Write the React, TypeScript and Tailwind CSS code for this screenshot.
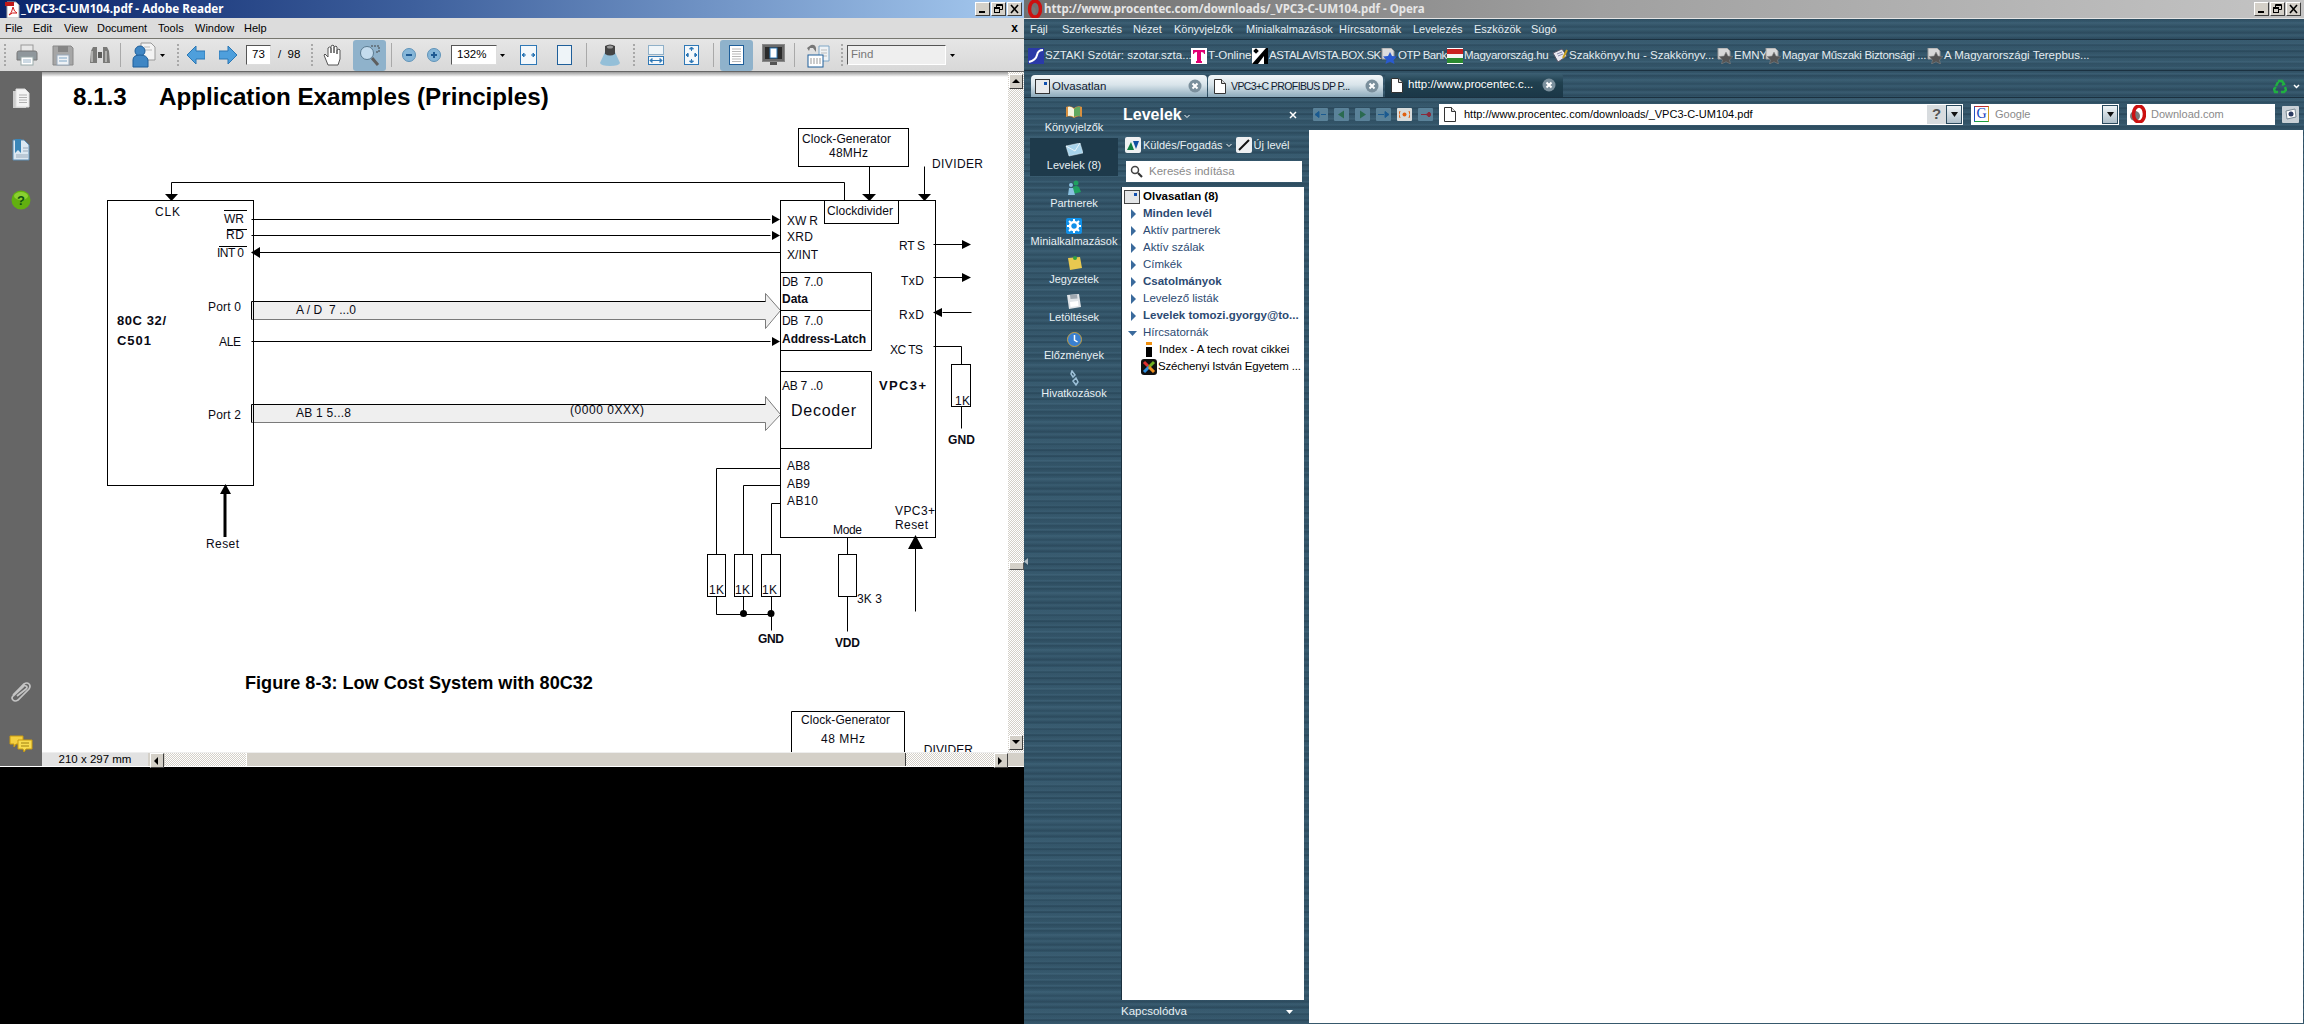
import React from 'react';

const stripes =
  'bg-[repeating-linear-gradient(180deg,rgba(20,40,55,0.30)_0px,rgba(20,40,55,0)_2px,rgba(120,160,180,0.10)_5px,rgba(20,40,55,0.18)_7px,rgba(120,160,180,0.06)_11px,rgba(20,40,55,0.28)_13px,rgba(120,160,180,0.08)_17px,rgba(20,40,55,0.30)_19px),repeating-linear-gradient(180deg,#33566b_0px,#3a5d72_1px,#2f5064_2px,#365a6e_3px)]';
const dither = 'bg-[repeating-conic-gradient(#d4d0c8_0_25%,#ffffff_0_50%)] bg-[length:2px_2px]';
const ui = 'font-["Liberation_Sans",sans-serif]';
const uiB = 'font-["Noto_Sans","Liberation_Sans",sans-serif]';

function WinBtn({ kind }: { kind: 'min' | 'max' | 'x' }) {
  return (
    <div className="w-[15px] h-[14px] bg-[#d4d0c8] border border-t-white border-l-white border-r-[#404040] border-b-[#404040] flex items-center justify-center">
      <svg width="11" height="10" viewBox="0 0 11 10">
        {kind === 'min' && <rect x="2" y="7" width="6" height="2" fill="#000" />}
        {kind === 'max' && (
          <g fill="none" stroke="#000">
            <path d="M3.5 3V.5h6v5H7" />
            <path d="M3 1.5h6" strokeWidth="1" />
            <rect x="1.5" y="3.5" width="5" height="5" />
            <path d="M1 4.5h6" />
          </g>
        )}
        {kind === 'x' && <path d="M2 1l7 8M9 1L2 9" stroke="#000" strokeWidth="1.6" />}
      </svg>
    </div>
  );
}

function Grip({ cls }: { cls: string }) {
  return <div className={`w-[2px] h-[22px] border-l-2 border-dotted border-[#a8a8a8] ${cls}`} />;
}
function Sep({ cls }: { cls: string }) {
  return <div className={`w-[1px] h-[24px] bg-[#a9a9a9] ${cls}`} />;
}
function Dd({ cls }: { cls: string }) {
  return (
    <svg className={cls} width="5" height="3" viewBox="0 0 5 3">
      <path d="M0 0h5L2.5 3z" fill="#000" />
    </svg>
  );
}

function ZoomCircle({ cls, plus }: { cls: string; plus: boolean }) {
  return (
    <svg className={cls} width="14" height="14" viewBox="0 0 14 14">
      <circle cx="7" cy="7" r="6.5" fill="#86b6d8" stroke="#5f93b8" />
      <path d={plus ? 'M4 7h6M7 4v6' : 'M4 7h6'} stroke="#1f5a92" strokeWidth="2" />
    </svg>
  );
}

function Toolbar() {
  return (
    <div className="h-[34px] bg-[linear-gradient(180deg,#e6e6e6,#d8d8d8)] border-t border-b border-t-[#77776f] border-b-[#666] flex items-center pl-[4px] shrink-0">
      <Grip cls="" />
      <svg className="ml-[10px]" width="22" height="22" viewBox="0 0 22 22">
        <rect x="5" y="1" width="12" height="7" fill="#e8e8e8" stroke="#999" />
        <path d="M1 9q0-2 2-2h16q2 0 2 2v7H1z" fill="#8f979c" stroke="#777" />
        <rect x="5" y="13" width="12" height="8" fill="#fff" stroke="#9aa" />
        <path d="M7 16h8M7 18h8" stroke="#9ab4c8" />
      </svg>
      <svg className="ml-[14px]" width="22" height="22" viewBox="0 0 22 22">
        <path d="M1 2h18l2 2v17H1z" fill="#a6a6a6" stroke="#888" />
        <rect x="6" y="2" width="10" height="6" fill="#858585" />
        <rect x="5" y="11" width="12" height="10" fill="#eef2f6" stroke="#9ab" />
        <path d="M7 14h8M7 17h8" stroke="#7fa6c6" />
      </svg>
      <svg className="ml-[15px]" width="22" height="22" viewBox="0 0 22 22">
        <path d="M1 19l1-12 2-4h4v16z" fill="#7a7a78" />
        <path d="M21 19l-1-12-2-4h-4v16z" fill="#7a7a78" />
        <rect x="9" y="8" width="4" height="6" fill="#5e5e5c" />
        <path d="M3 7v11M17 7v11" stroke="#b0b0ae" strokeWidth="2" />
      </svg>
      <Sep cls="ml-[9px]" />
      <svg className="ml-[11px]" width="24" height="26" viewBox="0 0 24 26">
        <path d="M9 1h10l4 4v13H9z" fill="#f3f3f3" stroke="#999" />
        <path d="M12 5h6M12 8h8" stroke="#bbb" />
        <circle cx="8" cy="9" r="5" fill="#3f86c4" stroke="#1f5f9a" />
        <path d="M1 25v-7q0-5 7-5t8 5v7z" fill="#3f86c4" stroke="#1f5f9a" />
      </svg>
      <Dd cls="ml-[4px]" />
      <Grip cls="ml-[12px]" />
      <svg className="ml-[8px]" width="18" height="20" viewBox="0 0 18 20">
        <path d="M0 10L9 1v5h9v8H9v5z" fill="#4e9fdc" stroke="#2a77b4" />
      </svg>
      <svg className="ml-[14px]" width="18" height="20" viewBox="0 0 18 20">
        <path d="M18 10L9 1v5H0v8h9v5z" fill="#4e9fdc" stroke="#2a77b4" />
      </svg>
      <div className={`ml-[9px] w-[25px] h-[20px] bg-white border border-t-[#555] border-l-[#555] border-r-[#ddd] border-b-[#ddd] flex items-center justify-center text-[11.5px] text-black ${ui}`}>73</div>
      <div className={`ml-[7px] w-[22px] text-[11.5px] text-black whitespace-pre ${ui}`}>/  98</div>
      <Grip cls="ml-[11px]" />
      <svg className="ml-[10px]" width="20" height="22" viewBox="0 0 20 22">
        <path d="M5 21L1 11l1-1 3 3V4l1.5-1L8 4v5V2l2-1 1 1v7V3l2-1 1 1v7-4l2-1 1 1v9l-2 6z" fill="#fff" stroke="#555" strokeLinejoin="round" />
      </svg>
      <div className="ml-[10px] w-[33px] h-[31px] bg-[#8fb2cb] rounded-[3px] flex items-center justify-center">
        <svg width="24" height="24" viewBox="0 0 24 24">
          <path d="M13 3h8v6h-4" fill="none" stroke="#444" strokeDasharray="2 1" />
          <circle cx="9" cy="10" r="6.5" fill="#c4dcee" stroke="#5a7a90" />
          <path d="M14 15l6 7" stroke="#5e5e5e" strokeWidth="3" />
        </svg>
      </div>
      <Sep cls="ml-[5px]" />
      <ZoomCircle cls="ml-[10px]" plus={false} />
      <ZoomCircle cls="ml-[11px]" plus />
      <div className={`ml-[10px] w-[46px] h-[20px] bg-white border border-t-[#555] border-l-[#555] border-r-[#ddd] border-b-[#ddd] flex items-center pl-[5px] text-[11.5px] text-black ${ui}`}>132%</div>
      <Dd cls="ml-[3px]" />
      <svg className="ml-[15px]" width="17" height="20" viewBox="0 0 17 20">
        <rect x=".5" y=".5" width="16" height="19" fill="#f4f8fb" stroke="#2f78b6" />
        <path d="M2 10h4M11 10h4M2 10l2-2v4zM15 10l-2-2v4z" stroke="#2f78b6" fill="#2f78b6" />
      </svg>
      <svg className="ml-[20px]" width="15" height="20" viewBox="0 0 15 20">
        <rect x=".5" y=".5" width="14" height="19" fill="#eef4f8" stroke="#1f5f9a" />
      </svg>
      <Sep cls="ml-[14px]" />
      <svg className="ml-[13px]" width="20" height="22" viewBox="0 0 20 22">
        <path d="M5 8h10l5 11q-1 3-10 3T0 19z" fill="#94bfd8" />
        <path d="M5 2q5-3 10 0v8q-5 3-10 0z" fill="#444" />
        <ellipse cx="10" cy="3" rx="3" ry="1.5" fill="#999" />
      </svg>
      <Grip cls="ml-[13px]" />
      <svg className="ml-[13px]" width="16" height="20" viewBox="0 0 16 20">
        <rect x=".5" y=".5" width="15" height="9" fill="#f0f5f8" stroke="#8fb0c8" />
        <rect x=".5" y="11.5" width="15" height="8" fill="#f4f8fb" stroke="#2f78b6" />
        <path d="M2 15.5h12M2 15.5l2-2v4zM14 15.5l-2-2v4z" stroke="#2f78b6" fill="#2f78b6" />
      </svg>
      <svg className="ml-[20px]" width="15" height="20" viewBox="0 0 15 20">
        <rect x=".5" y=".5" width="14" height="19" fill="#f4f8fb" stroke="#2f78b6" />
        <path d="M7.5 2v4M7.5 14v4M2 10h3M10 10h3M7.5 2l-2 2h4zM7.5 18l-2-2h4zM2 10l2-2v4zM13 10l-2-2v4z" stroke="#2f78b6" fill="#2f78b6" />
      </svg>
      <Sep cls="ml-[14px]" />
      <div className="ml-[6px] w-[33px] h-[31px] bg-[#8fb2cb] rounded-[3px] flex items-center justify-center">
        <svg width="15" height="20" viewBox="0 0 15 20">
          <rect x=".5" y=".5" width="14" height="19" fill="#fff" stroke="#1f5f9a" />
          <path d="M3 4h9M3 6.5h9M3 9h9M3 11.5h9M3 14h9M3 16.5h9" stroke="#b8b8b8" />
        </svg>
      </div>
      <svg className="ml-[9px]" width="23" height="22" viewBox="0 0 23 22">
        <rect x=".5" y=".5" width="22" height="17" fill="#6a6a6a" stroke="#888" />
        <rect x="3" y="3" width="17" height="12" fill="#2a2a2a" />
        <rect x="8" y="4" width="7" height="10" fill="#fff" stroke="#2f78b6" />
        <rect x="8" y="18" width="7" height="3" fill="#555" />
      </svg>
      <Sep cls="ml-[9px]" />
      <svg className="ml-[11px]" width="24" height="26" viewBox="0 0 24 26">
        <path d="M13 4h10v15H13z" fill="#eef2f5" stroke="#7fa6c6" />
        <path d="M15 8h6M15 11h6M15 14h6" stroke="#bbb" />
        <path d="M10 10V6Q9 2 5 3L1 6l2 3 1-3 3 0z" fill="#777" />
        <rect x="2" y="13" width="15" height="12" fill="#fff" stroke="#1f5f9a" />
        <path d="M5 16v6M8 16v6M11 16v6M14 16v6" stroke="#999" />
      </svg>
      <Grip cls="ml-[11px]" />
      <div className={`ml-[4px] w-[99px] h-[20px] bg-[#efefef] border border-t-[#555] border-l-[#555] border-r-white border-b-white flex items-center pl-[3px] text-[11.5px] text-[#777] ${ui}`}>Find</div>
      <Dd cls="ml-[4px]" />
    </div>
  );
}

function T({ x, y, w, b, s = 12, c = '#0a0a14', children }: { x: number; y: number; w?: number; b?: boolean; s?: number; c?: string; children: string }) {
  return (
    <text x={x} y={y} fontSize={s} fontWeight={b ? 700 : 400} fill={c} textLength={w} lengthAdjust={w ? 'spacing' : undefined} className="whitespace-pre">
      {children}
    </text>
  );
}

function Diagram() {
  const res = (x: number, y: number, w = 18) => <rect x={x} y={y} width={w} height={42} />;
  return (
    <svg width="966" height="550" viewBox="42 120 966 550" className='block font-["Liberation_Sans",sans-serif]'>
      <polygon points="251,301 765,301 765,293 780,310 765,328 765,319 251,319" fill="#efefef" />
      <polygon points="251,404 765,404 765,396 780,414 765,430 765,422 251,422" fill="#efefef" />
      <g transform="translate(0.5 0.5)" fill="none" stroke="#000">
        <path d="M251 319H765V328L780 310L765 293V301M251 422H765V430L780 414L765 396V404" stroke="#7a7a7a" />
        <path d="M251 301H765M251 404H765" />
        <path d="M251 301V319M251 404V422" />
        <rect x="107" y="200" width="146" height="285" />
        <rect x="780" y="200" width="155" height="337" />
        <rect x="798" y="128" width="110" height="38" />
        <rect x="824" y="200" width="74" height="23" fill="#fff" />
        <path d="M780 272H871V350H780M780 310H870M780 371H871V448H780" />
        <path d="M171 195V182H844V200" />
        <path d="M869 166V195M924 166V195" />
        <path d="M251 219H770M251 235H770M258 252H780M251 341H770" />
        <path d="M933 244H965M933 277H965M942 312H971" />
        <path d="M933 346H961V364M961 406V428" />
        <rect x="951" y="364" width="19" height="42" />
        <path d="M780 468H716V554M780 485H743V554M780 503H771V554" />
        {res(707, 554)}
        {res(734, 554)}
        {res(761, 554, 19)}
        <path d="M716 596V614H771M743 596V614M771 596V630" />
        <path d="M847 537V554M847 596V631" />
        {res(838, 554)}
        <path d="M915 546V611" />
      </g>
      <path d="M225 491V537" stroke="#000" strokeWidth="3" />
      <g fill="#000">
        <polygon points="165,194 178,194 171.5,201" />
        <polygon points="862,194 876,194 869.5,201" />
        <polygon points="918,194 931,194 924.5,201" />
        <polygon points="251,252.5 260,247 260,258" />
        <polygon points="772,215 780,219.5 772,224" />
        <polygon points="772,231 780,235.5 772,240" />
        <polygon points="772,337 780,341.5 772,346" />
        <polygon points="962,240 971,244.5 962,249" />
        <polygon points="962,273 971,277.5 962,282" />
        <polygon points="933,312.5 942,308 942,317" />
        <polygon points="225.5,484 220,494 231,494" />
        <polygon points="915.5,535 908,549 923,549" />
        <circle cx="743.5" cy="613.5" r="3.5" />
        <circle cx="771" cy="613.5" r="3.5" />
      </g>
      <path d="M224 210.5H247M227 229.5H247M219 246.5H247" stroke="#000" />
      <g>
        <T x={155} y={216} w={25}>CLK</T>
        <T x={224} y={223} w={20}>WR</T>
        <T x={226} y={239} w={18}>RD</T>
        <T x={217} y={257} w={27}>INT 0</T>
        <T x={208} y={311} w={33}>Port 0</T>
        <T x={219} y={346} w={22}>ALE</T>
        <T x={208} y={419} w={33}>Port 2</T>
        <T x={117} y={325} w={49} b s={13}>80C 32/</T>
        <T x={117} y={345} w={34} b s={13}>C501</T>
        <T x={296} y={314} w={60}>A / D  7 ...0</T>
        <T x={296} y={417} w={55}>AB 1 5...8</T>
        <T x={570} y={414} w={74}>(0000 0XXX)</T>
        <T x={206} y={548} w={33}>Reset</T>
        <T x={802} y={143} w={89}>Clock-Generator</T>
        <T x={829} y={157} w={39}>48MHz</T>
        <T x={932} y={168} w={51}>DIVIDER</T>
        <T x={827} y={215} w={66}>Clockdivider</T>
        <T x={787} y={225} w={31}>XW R</T>
        <T x={787} y={241} w={26}>XRD</T>
        <T x={787} y={259} w={31}>X/INT</T>
        <T x={782} y={286} w={41}>DB  7..0</T>
        <T x={782} y={303} w={26} b>Data</T>
        <T x={782} y={325} w={41}>DB  7..0</T>
        <T x={782} y={343} w={84} b>Address-Latch</T>
        <T x={782} y={390} w={41}>AB 7 ..0</T>
        <T x={791} y={416} w={65} s={16}>Decoder</T>
        <T x={899} y={250} w={26}>RT S</T>
        <T x={901} y={285} w={23}>TxD</T>
        <T x={899} y={319} w={25}>RxD</T>
        <T x={890} y={354} w={33}>XC TS</T>
        <T x={879} y={390} w={47} b s={13}>VPC3+</T>
        <T x={955} y={405} w={15}>1K</T>
        <T x={948} y={444} w={27} b>GND</T>
        <T x={787} y={470} w={23}>AB8</T>
        <T x={787} y={488} w={23}>AB9</T>
        <T x={787} y={505} w={31}>AB10</T>
        <T x={709} y={594} w={15}>1K</T>
        <T x={735} y={594} w={15}>1K</T>
        <T x={762} y={594} w={15}>1K</T>
        <T x={833} y={534} w={29}>Mode</T>
        <T x={895} y={515} w={40}>VPC3+</T>
        <T x={895} y={529} w={33}>Reset</T>
        <T x={857} y={603} w={25}>3K 3</T>
        <T x={758} y={643} w={26} b>GND</T>
        <T x={835} y={647} w={25} b>VDD</T>
      </g>
    </svg>
  );
}

function Diagram2() {
  return (
    <svg width="966" height="52" viewBox="42 700 966 52" className='block font-["Liberation_Sans",sans-serif]'>
      <path d="M791.5 752V711.5H904.5V752" fill="none" stroke="#000" />
      <T x={801} y={724} w={89}>Clock-Generator</T>
      <T x={821} y={743} w={44}>48 MHz</T>
      <T x={917} y={754} w={56}>. DIVIDER</T>
    </svg>
  );
}

function ScrollBtn({ dir }: { dir: 'up' | 'down' | 'left' | 'right' }) {
  const d = { up: 'M0 5L4 1l4 4z', down: 'M0 1l4 4 4-4z', left: 'M5 0L1 4l4 4z', right: 'M1 0l4 4-4 4z' }[dir];
  return (
    <div className="w-[14px] h-[15px] bg-[#d4d0c8] border border-t-white border-l-white border-r-[#404040] border-b-[#404040] flex items-center justify-center shrink-0">
      <svg width="8" height="8" viewBox="0 0 8 8">
        <path d={d} fill="#000" />
      </svg>
    </div>
  );
}

function Reader() {
  const menu: [string, string][] = [
    ['File', 'w-[28px]'],
    ['Edit', 'w-[31px]'],
    ['View', 'w-[33px]'],
    ['Document', 'w-[61px]'],
    ['Tools', 'w-[37px]'],
    ['Window', 'w-[49px]'],
    ['Help', 'w-[30px]'],
  ];
  return (
    <div className="w-[1024px] h-[767px] flex flex-col shrink-0 border-b border-b-white">
      <div className="h-[18px] bg-[linear-gradient(90deg,#0a246a,#3d5f9c_40%,#a6caf0)] flex items-center pl-[5px] pr-[2px] shrink-0">
        <svg width="15" height="17" viewBox="0 0 15 17">
          <path d="M2 1h9l3 3v13H2z" fill="#fff" stroke="#aaa" />
          <rect x="0" y="1" width="9" height="4" fill="#c01818" />
          <path d="M4 14q3-2 4-8 1 5 4 6-5-1-8 2" fill="none" stroke="#d01818" />
        </svg>
        <span className={`ml-[1px] text-[11.7px] font-bold text-white whitespace-pre ${uiB}`}>_VPC3-C-UM104.pdf - Adobe Reader</span>
        <div className="ml-auto flex gap-[1px]">
          <WinBtn kind="min" />
          <WinBtn kind="max" />
          <WinBtn kind="x" />
        </div>
      </div>
      <div className={`h-[20px] bg-[#dcdcdc] flex items-center pl-[5px] text-[11px] text-black shrink-0 ${ui}`}>
        {menu.map(([m, w]) => (
          <span key={m} className={w}>{m}</span>
        ))}
        <span className="ml-auto mr-[6px] font-bold text-[12px]">x</span>
      </div>
      <Toolbar />
      <div className="flex-1 flex min-h-0">
        <div className="w-[42px] bg-[#666] flex flex-col items-center shrink-0">
          <svg className="mt-[16px]" width="18" height="21" viewBox="0 0 18 21">
            <rect x="1" y="3" width="13" height="17" fill="#ccc" />
            <path d="M4 1h9l4 4v14H4z" fill="#f4f4f4" stroke="#ddd" />
            <path d="M7 7h8M7 9.5h8M7 12h8M7 14.5h8" stroke="#b0b0b0" />
          </svg>
          <svg className="mt-[30px]" width="18" height="22" viewBox="0 0 18 22">
            <path d="M1 1h11l5 5v15H1z" fill="#dce8f2" stroke="#5d8db4" />
            <path d="M3 0h6v14l-3-3-3 3z" fill="#3a86b8" />
            <path d="M11 9h5M11 12h5M4 16h12M4 18h12" stroke="#9ab" />
          </svg>
          <svg className="mt-[29px]" width="20" height="20" viewBox="0 0 20 20">
            <circle cx="10" cy="10" r="9.5" fill="#62b010" />
            <ellipse cx="10" cy="6" rx="7" ry="4" fill="#8ad030" />
            <text x="10" y="15" textAnchor="middle" fontSize="13" fontWeight="700" fill="#105010" fontFamily="Liberation Sans">?</text>
          </svg>
          <svg className="mt-auto" width="22" height="22" viewBox="0 0 22 22">
            <path d="M3 14L14 3q3-2 5 0t0 5L8 19q-3 2-5 0t0-4L13 6q1-2 3-1t0 3L7 15" fill="none" stroke="#c4c4c4" strokeWidth="1.7" />
          </svg>
          <svg className="mt-[32px] mb-[13px]" width="24" height="18" viewBox="0 0 24 18">
            <path d="M1 1h13v8H7l-2 3V9H1z" fill="#f4d040" stroke="#c89a10" />
            <path d="M9 5h14v9h-6l-2 3-1-3H9z" fill="#f8dc50" stroke="#c89a10" />
            <path d="M12 8h8M12 11h8" stroke="#a08010" />
          </svg>
        </div>
        <div className="flex-1 flex flex-col min-w-0">
          <div className="flex-1 flex min-h-0">
            <div className="w-[966px] bg-white flex flex-col overflow-hidden relative">
              <div className="absolute top-0 left-0 right-0 h-[5px] bg-[linear-gradient(180deg,#999,#fff)]" />
              <div className='h-[48px] flex items-center pl-[31px] pt-[2px] font-["Liberation_Sans",sans-serif] font-bold text-[24.2px] text-black shrink-0'>
                <span className="w-[86px]">8.1.3</span>
                <span>Application Examples (Principles)</span>
              </div>
              <Diagram />
              <div className='h-[30px] flex items-center pl-[203px] pb-[2px] font-["Liberation_Sans",sans-serif] font-bold text-[18.1px] text-black shrink-0'>
                Figure 8-3: Low Cost System with 80C32
              </div>
              <Diagram2 />
            </div>
            <div className={`w-[16px] flex flex-col items-center ${dither} relative`}>
              <div className="mt-[2px]"><ScrollBtn dir="up" /></div>
              <div className="mt-[473px] w-[15px] h-[8px] bg-[#d4d0c8] border border-t-white border-l-white border-r-[#555] border-b-[#555]" />
              <div className="mt-auto mb-[2px]"><ScrollBtn dir="down" /></div>
            </div>
          </div>
          <div className="h-[14px] flex shrink-0 bg-[#d4d0c8] border-t border-t-[#eee]">
            <div className={`w-[106px] bg-[#e2e2e2] flex items-center justify-center text-[11.5px] text-black ${ui}`}>210 x 297 mm</div>
            <div className="ml-[2px]"><ScrollBtn dir="left" /></div>
            <div className={`w-[81px] ml-[1px] ${dither}`} />
            <div className="w-[660px] bg-[#d4d0c8] border-l border-l-white border-r border-r-[#404040]" />
            <div className={`w-[88px] ${dither}`} />
            <ScrollBtn dir="right" />
          </div>
        </div>
      </div>
    </div>
  );
}

function StarPage() {
  return (
    <svg width="16" height="16" viewBox="0 0 16 16" className="shrink-0">
      <path d="M1 0h9l3 3v8H1z" fill="#d8d8d8" stroke="#999" />
      <path d="M9 4l2 4 5 .6-3.5 3.4 1 4-4.5-2.3L4.5 16l1-4L2 8.6 7 8z" fill="#555" stroke="#888" strokeWidth=".5" />
    </svg>
  );
}

function Close() {
  return (
    <svg width="14" height="14" viewBox="0 0 14 14" className="shrink-0">
      <circle cx="7" cy="7" r="6.5" fill="#7a8f9c" />
      <path d="M4.5 4.5l5 5M9.5 4.5l-5 5" stroke="#fff" strokeWidth="2" />
    </svg>
  );
}

function PageIcon({ cls = '' }: { cls?: string }) {
  return (
    <svg width="12" height="15" viewBox="0 0 12 15" className={`shrink-0 ${cls}`}>
      <path d="M.5.5h7l4 4v10H.5z" fill="#fff" stroke="#333" />
      <path d="M7.5.5v4h4" fill="#ddd" stroke="#333" />
    </svg>
  );
}

function OperaO({ w = 16 }: { w?: number }) {
  return (
    <svg width={w} height={w + 2} viewBox="0 0 16 18" className="shrink-0">
      <ellipse cx="5" cy="11" rx="5" ry="5" fill="#777" />
      <ellipse cx="9" cy="9" rx="5.5" ry="8" fill="none" stroke="#cc1010" strokeWidth="3.5" />
    </svg>
  );
}

function Bookmarks() {
  const stars: [string, string, string][] = [
    ['EMNY', 'w-[48px]', ''],
    ['Magyar Műszaki Biztonsági ...', 'w-[162px]', 'tracking-[-0.3px]'],
    ['A Magyarországi Terepbus...', 'w-[160px]', ''],
  ];
  const text = `ml-[1px] whitespace-nowrap`;
  return (
    <div className={`h-[31px] flex items-center pl-[4px] pt-[2px] text-[11.5px] text-[#e4ecf0] border-b border-b-[#1b3140] shrink-0 ${ui}`}>
      <div className="w-[163px] flex items-center">
        <svg width="16" height="16" viewBox="0 0 16 16" className="shrink-0">
          <rect width="16" height="16" fill="#2a3aa8" />
          <path d="M1 14Q8 12 9 7t6-5" stroke="#fff" strokeWidth="2" fill="none" />
        </svg>
        <span className={text}>SZTAKI Szótár: szotar.szta...</span>
      </div>
      <div className="w-[61px] flex items-center">
        <svg width="16" height="16" viewBox="0 0 16 16" className="shrink-0">
          <rect width="16" height="16" fill="#fff" />
          <path d="M2 2h12v4h-1q0-2-3-2v9h1v2H5v-2h1V4Q3 4 3 6H2z" fill="#e20074" />
        </svg>
        <span className={text}>T-Online</span>
      </div>
      <div className="w-[129px] flex items-center">
        <svg width="16" height="16" viewBox="0 0 16 16" className="shrink-0">
          <rect width="16" height="16" fill="#fff" />
          <path d="M0 16L14 0h2v16h-4V8l-6 8z" fill="#000" />
          <rect x="2" y="1" width="4" height="4" fill="#000" transform="rotate(45 4 3)" />
        </svg>
        <span className={`${text} tracking-[-0.5px]`}>ASTALAVISTA.BOX.SK</span>
      </div>
      <div className="w-[66px] flex items-center">
        <svg width="16" height="16" viewBox="0 0 16 16" className="shrink-0">
          <path d="M1 0h9l3 3v8H1z" fill="#ddd" stroke="#999" />
          <path d="M9 4l2 4 5 .6-3.5 3.4 1 4-4.5-2.3L4.5 16l1-4L2 8.6 7 8z" fill="#2a5ad0" />
        </svg>
        <span className={`${text} tracking-[-0.5px]`}>OTP Bank</span>
      </div>
      <div className="w-[105px] flex items-center">
        <svg width="16" height="16" viewBox="0 0 16 16" className="shrink-0">
          <rect width="16" height="16" fill="#fff" />
          <rect y="1" width="16" height="5" fill="#c82020" />
          <rect y="6" width="16" height="4" fill="#f4f4f4" />
          <rect y="10" width="16" height="5" fill="#2a8a30" />
        </svg>
        <span className={`${text} tracking-[-0.3px]`}>Magyarország.hu</span>
      </div>
      <div className="w-[165px] flex items-center">
        <svg width="16" height="16" viewBox="0 0 16 16" className="shrink-0">
          <path d="M1 5l9-4 5 7-9 6z" fill="#e8e8f0" stroke="#556" />
          <path d="M5 6l5-2M6 8l5-2" stroke="#88a" />
          <path d="M11 10l4-8" stroke="#c8a020" strokeWidth="2" />
        </svg>
        <span className={text}>Szakkönyv.hu - Szakkönyv...</span>
      </div>
      {stars.map(([s, w, t]) => (
        <div key={s} className={`${w} flex items-center`}>
          <StarPage />
          <span className={`${text} ${t}`}>{s}</span>
        </div>
      ))}
    </div>
  );
}

function Tabs() {
  const light = 'bg-[linear-gradient(180deg,#f2f6f8,#d8e4ea_45%,#8caabb)] text-[#102030]';
  return (
    <div className={`h-[27px] flex items-end pl-[7px] border-b border-b-[#1b3140] shrink-0 relative text-[11.5px] ${ui}`}>
      <div className={`w-[176px] h-[22px] rounded-t-[4px] ${light} flex items-center pl-[4px] pr-[5px]`}>
        <svg width="15" height="15" viewBox="0 0 15 15" className="shrink-0">
          <rect x=".5" y=".5" width="14" height="14" fill="#e8eaec" stroke="#333" />
          <rect x="9" y="3" width="3" height="3" fill="#1050b0" />
        </svg>
        <span className="ml-[2px] pt-[2px]">Olvasatlan</span>
        <div className="ml-auto"><Close /></div>
      </div>
      <div className={`ml-[1px] w-[175px] h-[22px] rounded-t-[4px] ${light} flex items-center pl-[6px] pr-[4px]`}>
        <PageIcon />
        <span className="ml-[5px] pt-[2px] whitespace-nowrap text-[10.5px] tracking-[-0.6px]">VPC3+C PROFIBUS DP P...</span>
        <div className="ml-auto"><Close /></div>
      </div>
      <div className="ml-[2px] w-[178px] h-[24px] rounded-t-[4px] bg-[linear-gradient(180deg,#3d6074,#20404f_40%,#1b3747)] text-white flex items-center pl-[6px] pr-[7px]">
        <PageIcon />
        <span className="ml-[5px] whitespace-nowrap">http://www.procentec.c...</span>
        <div className="ml-auto"><Close /></div>
      </div>
      <div className="ml-auto mr-[4px] mb-[3px] flex items-center gap-[6px]">
        <svg width="14" height="15" viewBox="0 0 14 15">
          <path d="M5 2h4l2 3-2 1M12 8l1 3-2 2H8M5 13H2l-1-3 2-2M3 7l2-4" fill="none" stroke="#20b040" strokeWidth="2.4" />
        </svg>
        <svg width="7" height="5" viewBox="0 0 7 5">
          <path d="M1 1l2.5 2.5L6 1" stroke="#fff" fill="none" strokeWidth="1.5" />
        </svg>
      </div>
    </div>
  );
}

function Side() {
  const items: [string, React.ReactNode][] = [
    [
      'Könyvjelzők',
      <svg width="18" height="14" viewBox="0 0 18 14">
        <path d="M1 2q4-2 8 1 4-3 8-1v10q-4-2-8 1-4-3-8-1z" fill="#d89040" />
        <path d="M3 2q3-1 6 2v8q-3-2-6-1z" fill="#f4f4e0" />
        <path d="M15 2q-3-1-6 2v8q3-2 6-1z" fill="#60a860" />
      </svg>,
    ],
    [
      'Levelek (8)',
      <svg width="18" height="14" viewBox="0 0 18 14">
        <path d="M1 3l14-3 3 10-14 3z" fill="#a8d4ec" stroke="#e8f4fa" strokeWidth=".5" />
        <path d="M1 3l9 5 5-8" fill="none" stroke="#e8f4fa" />
      </svg>,
    ],
    [
      'Partnerek',
      <svg width="14" height="16" viewBox="0 0 14 16">
        <circle cx="9" cy="3" r="2.5" fill="#20a060" />
        <path d="M6 14V7q3-2 6 0l2 5z" fill="#20a060" />
        <circle cx="4" cy="5" r="2" fill="#8ac0e0" />
        <path d="M1 15l1-7h4l2 7z" fill="#8ac0e0" />
      </svg>,
    ],
    [
      'Minialkalmazások',
      <svg width="16" height="16" viewBox="0 0 16 16">
        <rect width="16" height="16" rx="2" fill="#1090e8" />
        <circle cx="8" cy="8" r="4" fill="none" stroke="#fff" strokeWidth="2.5" />
        <path d="M8 1v3M8 12v3M1 8h3M12 8h3M3 3l2 2M11 11l2 2M13 3l-2 2M3 13l2-2" stroke="#fff" strokeWidth="2" />
      </svg>,
    ],
    [
      'Jegyzetek',
      <svg width="15" height="15" viewBox="0 0 15 15">
        <path d="M1 2l12-1 2 11-12 2z" fill="#e8c850" />
        <circle cx="8" cy="2" r="2" fill="#30a040" />
      </svg>,
    ],
    [
      'Letöltések',
      <svg width="14" height="15" viewBox="0 0 14 15">
        <path d="M0 1l12-1 2 13-12 2z" fill="#e0e4e8" />
        <path d="M3 8l8-1 .5 5-8 1z" fill="#fff" />
        <path d="M3 1l7-.5.5 4-7 .5z" fill="#a0a8b0" />
      </svg>,
    ],
    [
      'Előzmények',
      <svg width="15" height="15" viewBox="0 0 15 15">
        <circle cx="7.5" cy="7.5" r="7" fill="#3a80d0" stroke="#c8a040" />
        <path d="M7.5 3v5l3 2" stroke="#fff" fill="none" strokeWidth="1.5" />
      </svg>,
    ],
    [
      'Hivatkozások',
      <svg width="9" height="16" viewBox="0 0 9 16">
        <path d="M2 1l3 4-2 2-2-3zM6 8l2 4-2 3-3-4z" fill="none" stroke="#9cc0d8" strokeWidth="1.5" />
      </svg>,
    ],
  ];
  return (
    <div className={`w-[97px] shrink-0 pt-[2px] pl-[6px] text-[11px] text-[#e8f0f4] relative ${ui}`}>
      {items.map(([label, icon], i) => (
        <div key={label as string} className={`w-[88px] h-[38px] flex flex-col items-center pt-[3px] ${i === 1 ? 'bg-[#1e3a4b]' : ''}`}>
          <div className="h-[17px] flex items-center justify-center">{icon}</div>
          <span className="leading-[14px] whitespace-nowrap">{label}</span>
        </div>
      ))}
      <svg className="absolute left-0 top-[460px]" width="4" height="7" viewBox="0 0 4 7">
        <path d="M4 0v7L0 3.5z" fill="#b0bcc4" />
      </svg>
    </div>
  );
}

function Panel() {
  const Tri = ({ open }: { open?: boolean }) => (
    <svg width="10" height="10" viewBox="0 0 10 10" className="shrink-0">
      {open ? <path d="M0 3h9L4.5 8z" fill="#3a6a9c" /> : <path d="M2 0l5 5-5 5z" fill="#3a6a9c" />}
    </svg>
  );
  const rows: [string, boolean][] = [
    ['Minden levél', true],
    ['Aktív partnerek', false],
    ['Aktív szálak', false],
    ['Címkék', false],
    ['Csatolmányok', true],
    ['Levelező listák', false],
    ['Levelek tomozi.gyorgy@to...', true],
  ];
  return (
    <div className={`w-[188px] shrink-0 flex flex-col pr-[5px] text-[11.5px] ${ui}`}>
      <div className="h-[34px] flex items-center pl-[2px] shrink-0">
        <span className="text-[16px] font-bold text-white">Levelek</span>
        <svg className="ml-[2px] mt-[2px]" width="6" height="5" viewBox="0 0 6 5">
          <path d="M.5 1L3 3.5 5.5 1" stroke="#fff" fill="none" />
        </svg>
        <svg className="ml-auto mr-[7px]" width="8" height="8" viewBox="0 0 8 8">
          <path d="M1 1l6 6M7 1L1 7" stroke="#fff" strokeWidth="1.5" />
        </svg>
      </div>
      <div className="h-[29px] flex items-start pt-[5px] pl-[4px] text-[11px] text-[#e8f0f4] shrink-0">
        <svg width="16" height="16" viewBox="0 0 16 16" className="shrink-0">
          <rect width="16" height="16" rx="2" fill="#eef0f2" />
          <path d="M2 13l4-8 3 8z" fill="#108040" />
          <path d="M8 4h6l-3 8z" fill="#1050a0" />
        </svg>
        <span className="ml-[2px] whitespace-nowrap">Küldés/Fogadás</span>
        <svg className="ml-[3px] mt-[6px]" width="6" height="5" viewBox="0 0 6 5">
          <path d="M.5 1L3 3.5 5.5 1" stroke="#fff" fill="none" />
        </svg>
        <svg className="ml-[4px]" width="16" height="16" viewBox="0 0 16 16">
          <rect width="16" height="16" rx="2" fill="#eef0f2" />
          <path d="M3 13L13 3" stroke="#111" strokeWidth="2" />
        </svg>
        <span className="ml-[2px] whitespace-nowrap">Új levél</span>
      </div>
      <div className="ml-[5px] w-[176px] h-[21px] bg-white flex items-center pl-[4px] text-[#8a8a8a] shrink-0">
        <svg width="13" height="13" viewBox="0 0 13 13" className="shrink-0">
          <circle cx="5" cy="5" r="3.5" fill="#fff" stroke="#444" strokeWidth="1.5" />
          <path d="M8 8l4 4" stroke="#333" strokeWidth="2.2" />
        </svg>
        <span className="ml-[6px]">Keresés indítása</span>
      </div>
      <div className="mt-[5px] flex-1 bg-white border-l border-l-[#1b3140] flex flex-col pt-[1px] overflow-hidden text-[#2c4a72]">
        <div className="h-[17px] flex items-center pl-[2px] font-bold text-black">
          <svg width="16" height="14" viewBox="0 0 16 14" className="shrink-0">
            <rect x=".5" y=".5" width="15" height="13" fill="#e4e6e8" stroke="#444" />
            <rect x="10" y="3" width="3" height="3" fill="#1050b0" />
          </svg>
          <span className="ml-[3px]">Olvasatlan (8)</span>
        </div>
        {rows.map(([r, b]) => (
          <div key={r} className={`h-[17px] flex items-center pl-[7px] whitespace-nowrap ${b ? 'font-bold' : ''}`}>
            <Tri />
            <span className="ml-[4px]">{r}</span>
          </div>
        ))}
        <div className="h-[17px] flex items-center pl-[6px]">
          <Tri open />
          <span className="ml-[5px]">Hírcsatornák</span>
        </div>
        <div className="h-[17px] flex items-center pl-[24px] text-black whitespace-nowrap">
          <svg width="7" height="15" viewBox="0 0 7 15" className="shrink-0">
            <rect width="6" height="3" fill="#f09010" />
            <rect y="5" width="6" height="10" fill="#000" />
          </svg>
          <span className="ml-[6px]">Index - A tech rovat cikkei</span>
        </div>
        <div className="h-[17px] flex items-center pl-[19px] text-black whitespace-nowrap">
          <svg width="16" height="16" viewBox="0 0 16 16" className="shrink-0">
            <rect width="16" height="16" rx="3" fill="#111" />
            <path d="M3 3l5 5" stroke="#e03030" strokeWidth="3" />
            <path d="M13 3L8 8" stroke="#70b020" strokeWidth="3" />
            <path d="M3 13l5-5" stroke="#3090e0" strokeWidth="3" />
            <path d="M13 13L8 8" stroke="#f09020" strokeWidth="3" />
          </svg>
          <span className="ml-[1px] tracking-[-0.2px]">Széchenyi István Egyetem ...</span>
        </div>
      </div>
      <div className="h-[24px] flex items-center text-[#e8f0f4] shrink-0 pr-[11px]">
        <span>Kapcsolódva</span>
        <svg className="ml-auto" width="7" height="4" viewBox="0 0 7 4">
          <path d="M0 0h7L3.5 4z" fill="#fff" />
        </svg>
      </div>
    </div>
  );
}

function NavBtn({ children, light }: { children: React.ReactNode; light?: boolean }) {
  return (
    <div className={`w-[15px] h-[13px] rounded-[1px] flex items-center justify-center ${light ? 'bg-[#d8dcdc]' : 'bg-[#5a8299]'}`}>
      <svg width="11" height="9" viewBox="0 0 11 9">{children}</svg>
    </div>
  );
}

function Select() {
  return (
    <div className="w-[16px] h-[19px] bg-[linear-gradient(180deg,#f0f4f6,#aebfca)] border border-[#2a4a5e] flex items-center justify-center shrink-0">
      <svg width="7" height="5" viewBox="0 0 7 5">
        <path d="M0 0h7L3.5 5z" fill="#111" />
      </svg>
    </div>
  );
}

function AddressRow() {
  return (
    <div className={`h-[32px] flex items-center pl-[4px] text-[11px] shrink-0 ${ui}`}>
      <div className="flex gap-[6px]">
        <NavBtn><path d="M0 4.5l4-3v6zM6 4.5h5" fill="#1a5a90" stroke="#1a5a90" /></NavBtn>
        <NavBtn><path d="M2 4.5l6-4v8z" fill="#2a6a50" /></NavBtn>
        <NavBtn><path d="M9 4.5l-6-4v8z" fill="#2a6a50" /></NavBtn>
        <NavBtn><path d="M11 4.5l-4-3v6zM0 4.5h6" fill="#1a5a90" stroke="#1a5a90" /></NavBtn>
        <NavBtn light><circle cx="5.5" cy="4.5" r="2" fill="#e06010" /><path d="M1 1q-2 3.5 0 7M10 1q2 3.5 0 7" stroke="#e06010" fill="none" /></NavBtn>
        <NavBtn><path d="M1 4.5h6M9 2.5a2 2 0 1 0 .01 0" stroke="#8a2a3a" fill="#8a2a3a" /></NavBtn>
      </div>
      <div className="ml-[6px] w-[524px] h-[21px] bg-white flex items-center pl-[5px] pr-[1px] shrink-0">
        <PageIcon />
        <span className="ml-[8px] text-black">http://www.procentec.com/downloads/_VPC3-C-UM104.pdf</span>
        <div className="ml-auto w-[19px] h-[19px] bg-[#d8dcdf] flex items-center justify-center text-[#555] font-bold text-[15px]">?</div>
        <Select />
      </div>
      <div className="ml-[8px] w-[148px] h-[21px] bg-white flex items-center pl-[3px] pr-[1px] shrink-0">
        <span className='w-[15px] h-[16px] border border-t-[#c03030] border-l-[#2050c0] border-r-[#d0a020] border-b-[#20a040] flex items-center justify-center text-[#1040c0] text-[14px] font-["Liberation_Serif",serif] leading-none shrink-0'>G</span>
        <span className="ml-[6px] text-[#8a8a8a]">Google</span>
        <div className="ml-auto"><Select /></div>
      </div>
      <div className="ml-[8px] w-[148px] h-[21px] bg-white flex items-center pl-[3px] shrink-0">
        <OperaO />
        <span className="ml-[5px] text-[#8a8a8a]">Download.com</span>
      </div>
      <div className="ml-[7px] w-[17px] h-[17px] bg-[#c8d0d6] rounded-[1px] flex items-center justify-center shrink-0">
        <svg width="12" height="12" viewBox="0 0 12 12">
          <path d="M1 3l9-2 1 8-9 2z" fill="#fff" stroke="#7a8a94" />
          <circle cx="6" cy="6" r="2.5" fill="#2a3a60" />
        </svg>
      </div>
    </div>
  );
}

function Opera() {
  const menu: [string, string][] = [
    ['Fájl', 'w-[32px]'],
    ['Szerkesztés', 'w-[71px]'],
    ['Nézet', 'w-[41px]'],
    ['Könyvjelzők', 'w-[72px]'],
    ['Minialkalmazások', 'w-[93px]'],
    ['Hírcsatornák', 'w-[74px]'],
    ['Levelezés', 'w-[61px]'],
    ['Eszközök', 'w-[57px]'],
    ['Súgó', 'w-[30px]'],
  ];
  return (
    <div className="w-[1280px] h-[1024px] flex flex-col shrink-0">
      <div className="h-[19px] bg-[linear-gradient(90deg,#707070,#a0a0a0_45%,#c4c4c4)] border-b border-b-[#e4e4e4] flex items-center pl-[2px] pr-[2px] shrink-0">
        <OperaO />
        <span className={`ml-[2px] text-[11.5px] font-bold text-[#e6e6e6] whitespace-pre ${uiB}`}>http://www.procentec.com/downloads/_VPC3-C-UM104.pdf - Opera</span>
        <div className="ml-auto flex gap-[1px] mr-[1px]">
          <WinBtn kind="min" />
          <WinBtn kind="max" />
          <WinBtn kind="x" />
        </div>
      </div>
      <div className={`flex-1 flex flex-col min-h-0 ${stripes}`}>
        <div className={`h-[21px] flex items-center pl-[6px] text-[11px] text-[#e6eef2] border-b border-b-[#1b3140] shrink-0 ${ui}`}>
          {menu.map(([m, w]) => (
            <span key={m} className={w}>{m}</span>
          ))}
        </div>
        <Bookmarks />
        <Tabs />
        <div className="flex-1 flex min-h-0">
          <Side />
          <Panel />
          <div className="flex-1 flex flex-col min-w-0">
            <AddressRow />
            <div className="flex-1 bg-white mr-[1px] mb-[1px]" />
          </div>
        </div>
      </div>
    </div>
  );
}

export default function App() {
  return (
    <div className="w-[2304px] h-[1024px] bg-black flex overflow-hidden">
      <Reader />
      <Opera />
    </div>
  );
}
